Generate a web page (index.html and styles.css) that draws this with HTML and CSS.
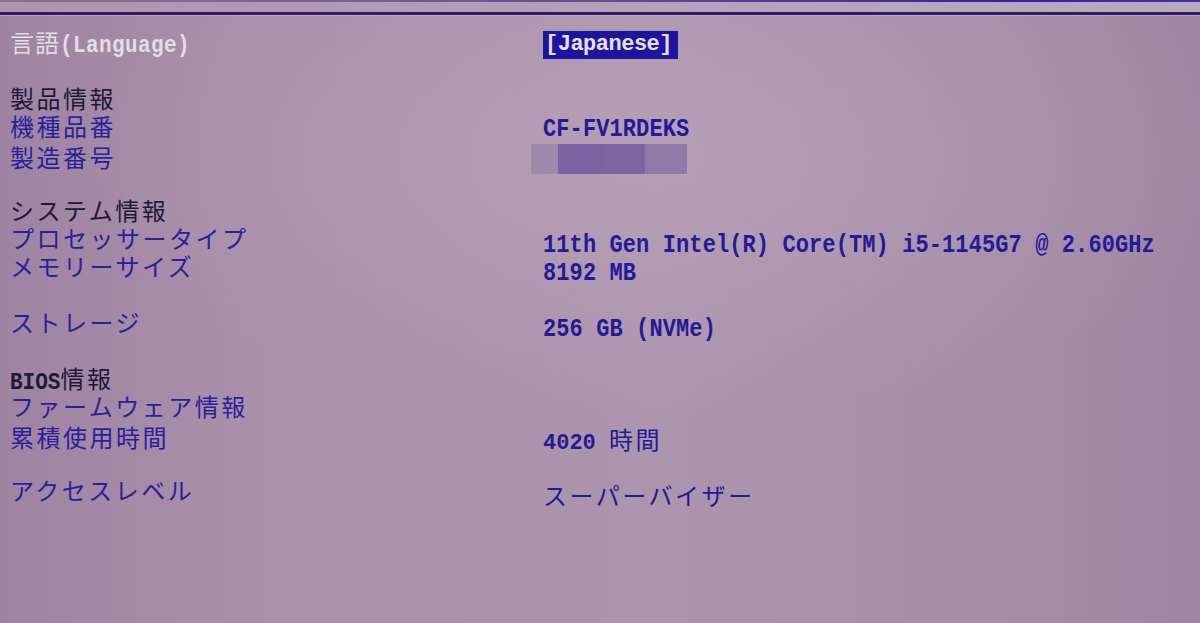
FILE: index.html
```html
<!DOCTYPE html>
<html lang="ja">
<head>
  <meta charset="UTF-8" />
  <title>BIOS - Main</title>
  <link rel="stylesheet" href="styles.css">
</head>
<body>
  <div class="screen">
    <div class="top-rule"></div>
    <div class="top-band"></div>
    <div class="main-rule"></div>

    <div class="items">
      <div class="row">
        <div class="label light">言語<span class="mono">(Language)</span></div>
        <div class="value"><span class="selected">[Japanese]</span></div>
      </div>
      <div class="row empty"></div>

      <div class="row">
        <div class="label heading">製品情報</div>
      </div>
      <div class="row">
        <div class="label">機種品番</div>
        <div class="value mono shift-sm">CF-FV1RDEKS</div>
      </div>
      <div class="row">
        <div class="label">製造番号</div>
        <div class="value">
          <div class="masked">
            <span class="m1"></span><span class="m2"></span><span class="m3"></span><span class="m4"></span>
          </div>
        </div>
      </div>
      <div class="row empty"></div>

      <div class="row">
        <div class="label heading">システム情報</div>
      </div>
      <div class="row">
        <div class="label">プロセッサータイプ</div>
        <div class="value mono shift">11th Gen Intel(R) Core(TM) i5-1145G7 @ 2.60GHz</div>
      </div>
      <div class="row">
        <div class="label">メモリーサイズ</div>
        <div class="value mono shift">8192 MB</div>
      </div>
      <div class="row empty"></div>
      <div class="row">
        <div class="label">ストレージ</div>
        <div class="value mono shift">256 GB (NVMe)</div>
      </div>
      <div class="row empty"></div>

      <div class="row">
        <div class="label heading"><span class="mono">BIOS</span>情報</div>
      </div>
      <div class="row">
        <div class="label">ファームウェア情報</div>
      </div>
      <div class="row">
        <div class="label">累積使用時間</div>
        <div class="value shift-jp"><span class="mono">4020 </span>時間</div>
      </div>
      <div class="row empty"></div>
      <div class="row">
        <div class="label">アクセスレベル</div>
        <div class="value shift-jp">スーパーバイザー</div>
      </div>
    </div>
  </div>
</body>
</html>
```

FILE: styles.css
```css
html, body {
  margin: 0;
  height: 100%;
}

body {
  font-family: "Noto Sans CJK JP", "Noto Sans", sans-serif;
  background:
    radial-gradient(ellipse 70% 60% at 55% 25%, rgba(192, 170, 190, 0.5), rgba(192, 170, 190, 0) 70%),
    linear-gradient(90deg, #9e84a1 0%, #a98fa9 20%, #ad95ad 55%, #a68ca7 85%, #9f85a1 100%);
  color: #2a1f9c;
  overflow: hidden;
}

.screen {
  height: 100%;
}

.top-rule {
  height: 2px;
  background: linear-gradient(90deg, rgba(70, 50, 120, 0.25) 0%, #5a3f92 60%, #2c22a8 85%, #3b34b8 100%);
}

.top-band {
  height: 10px;
  background: linear-gradient(90deg, #ad95ad, #b7a2b8 60%, #bba8bb);
}

.main-rule {
  height: 3px;
  background: #2c1c6e;
  box-shadow: 0 1px 0 rgba(200, 185, 210, 0.6);
}

.items {
  padding: 13px 0 0 10px;
}

.row {
  display: grid;
  grid-template-columns: 533px 1fr;
  height: 28px;
  align-items: center;
}

.label {
  font-size: 24px;
  letter-spacing: 2.5px;
  line-height: 28px;
  white-space: nowrap;
}

.label.light {
  color: #e6dce8;
  letter-spacing: 1px;
}

.label.heading {
  color: #1f1838;
}

.mono {
  font-family: "Liberation Mono", "DejaVu Sans Mono", monospace;
  font-weight: bold;
  letter-spacing: 0;
}

.label .mono {
  font-size: 21px;
  display: inline-block;
  transform: scaleY(1.1);
}

.label.light .mono {
  letter-spacing: 0.4px;
}

.value {
  font-size: 24px;
  letter-spacing: 2.5px;
  color: #221a98;
  white-space: nowrap;
  line-height: 28px;
}

.value.mono {
  font-size: 22px;
  letter-spacing: 0.1px;
  display: inline-block;
  transform: scaleY(1.2);
  transform-origin: left center;
}

.value .mono {
  font-size: 22px;
}

.shift,
.shift-sm,
.shift-jp {
  position: relative;
}

.shift { top: 8px; }
.shift-sm { top: 4px; }
.shift-jp { top: 5px; }

.selected {
  display: inline-block;
  position: relative;
  top: -2px;
  background: #1d14a0;
  color: #e8e0f0;
  font-family: "Liberation Mono", monospace;
  font-weight: bold;
  font-size: 22px;
  letter-spacing: -0.5px;
  line-height: 28px;
  padding: 0 6px 0 2px;
}

.masked {
  display: flex;
  height: 30px;
  margin-left: -12px;
  margin-top: 4px;
}

.masked span {
  display: block;
  height: 100%;
}

.m1 { width: 27px; background: #a08aaa; }
.m2 { width: 44px; background: #7b62a2; }
.m3 { width: 43px; background: #7d65a2; }
.m4 { width: 42px; background: #9379aa; }
```
